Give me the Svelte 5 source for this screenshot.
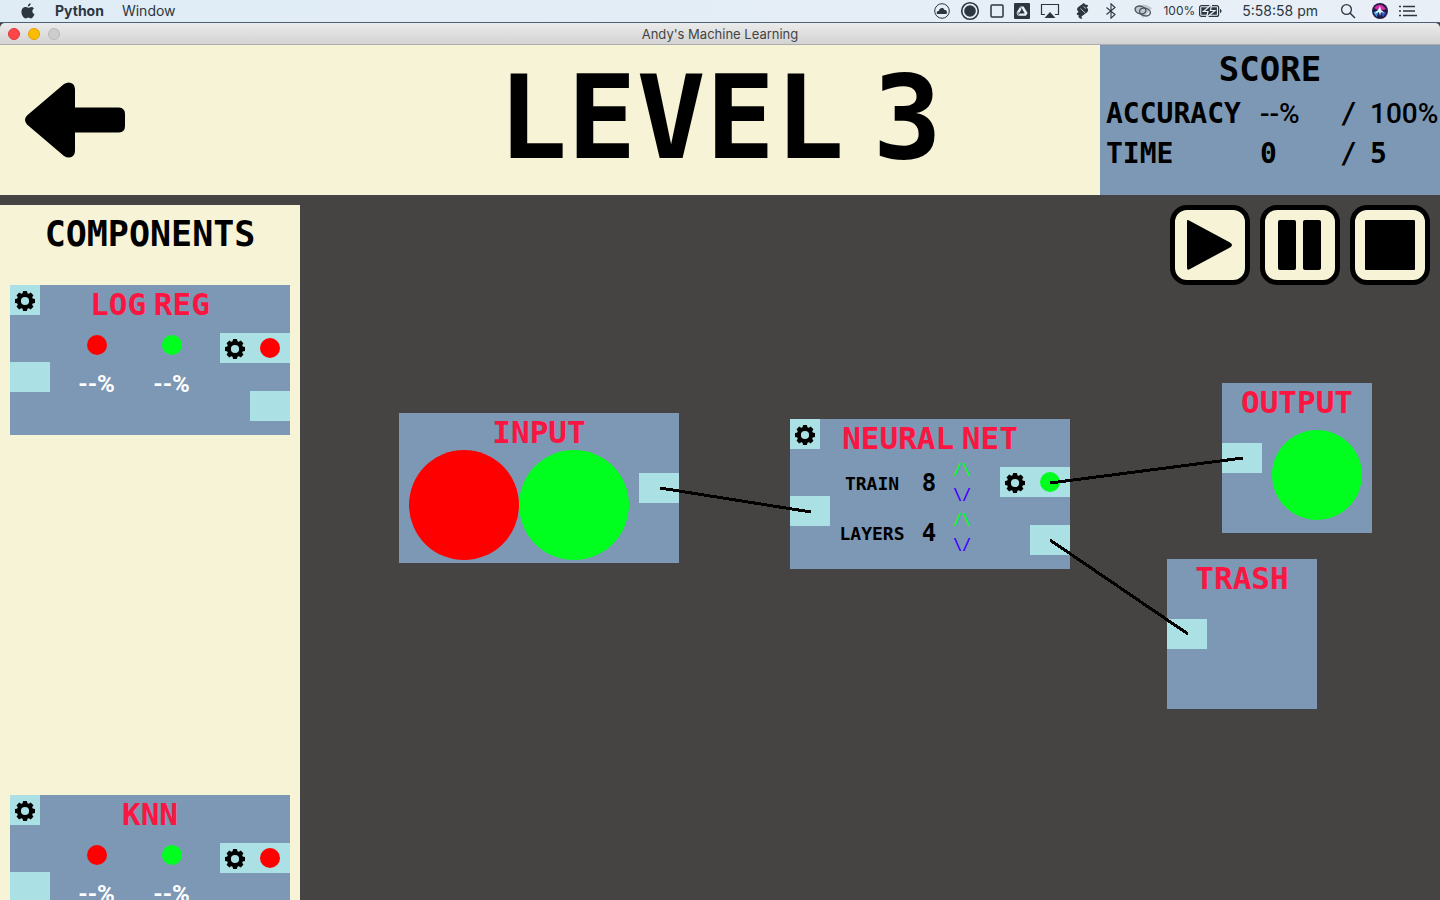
<script>
  const palette = [
    { name: ['LOG', 'REG'] },
    { name: ['KNN'] }
  ];
  const settings = [
    { label: 'TRAIN', value: 8 },
    { label: 'LAYERS', value: 4 }
  ];
  const wires = [
    [360, 293, 511, 317],
    [750, 288, 943, 263],
    [750, 345, 888, 439]
  ];
  const teeth = [0, 45, 90, 135, 180, 225, 270, 315];
</script>

{#snippet words(list)}{#each list as word, i}{#if i > 0}<span class="space">{' '}</span>{/if}{word}{/each}{/snippet}

{#snippet gear(label)}
  <button class="gear" aria-label={label}>
    <svg width="20" height="20" viewBox="-10 -10 20 20">
      <circle r="6.1" fill="none" stroke="#000" stroke-width="4" />
      {#each teeth as angle}
        <path d="M-2.6-7L-1.9-10H1.9L2.6-7Z" transform="rotate({angle})" />
      {/each}
    </svg>
  </button>
{/snippet}

{#snippet model(name, output, body)}
  <div class="left">
    {@render gear('Settings')}
    <div class="port"></div>
  </div>
  <div class="main">
    <h2>{@render words(name)}</h2>
    {@render body()}
  </div>
  <div class="right">
    <div class="filter">
      {@render gear('Filter')}
      <span class="dot {output}"></span>
    </div>
    <div class="port"></div>
  </div>
{/snippet}

{#snippet rates()}
  <div class="rates">
    <div><span class="dot red"></span><span>--%</span></div>
    <div><span class="dot green"></span><span>--%</span></div>
  </div>
{/snippet}

{#snippet steppers()}
  {#each settings as item}
    <div class="setting">
      <span class="label">{item.label}</span>
      <span class="value">{item.value}</span>
      <span class="steps">
        <button class="up">/\</button>
        <button class="down">\/</button>
      </span>
    </div>
  {/each}
{/snippet}

<div class="screen">
  <nav class="menubar">
    <svg class="apple" width="14" height="16" viewBox="0 0 14 16">
      <path d="M9.7.2c.1 1.6-1.3 3.2-2.8 3.2C6.700 1.900 8.100.4 9.700.2ZM12.900 5.500c-2.300 1.500-1.900 4.600.6 5.600-.6 1.800-2 4.300-3.500 4.300-1 0-1.500-.6-2.700-.6s-1.700.6-2.600.6C2.700 15.400.4 12 .4 8.700c0-3 2-4.700 4-4.700 1.200 0 2 .7 2.900.7.800 0 1.900-.8 3.300-.8 1 0 1.800.5 2.300 1.600Z" />
    </svg>
    <b>Python</b>
    <span>Window</span>
    <div class="status">
      <svg width="16" height="16" viewBox="0 0 16 16"><circle cx="8" cy="8" r="7.300" fill="none" stroke="#2c3640" /><path d="M3 11c-1-2 .5-3.200 1.800-3C5.500 4.500 9.500 4 10.500 7c2.500 0 3 2.500 2 4Z" /></svg>
      <svg width="20" height="20" viewBox="0 0 20 20"><circle cx="10" cy="10" r="8.300" fill="none" stroke="#2c3640" stroke-width="1.600" /><circle cx="10" cy="10" r="5.800" /></svg>
      <svg width="14" height="14" viewBox="0 0 14 14"><rect x="1" y="1" width="12" height="12" rx="1" fill="none" stroke="#2c3640" stroke-width="1.500" /></svg>
      <svg width="16" height="16" viewBox="0 0 16 16"><rect width="16" height="16" rx="1" /><path d="M6.200 3.500h3.400l4 6.500-1.700 2.700H4L2.400 10ZM8 6l-2.500 4.300h5Z" fill="#e8eff7" fill-rule="evenodd" /><path d="m6.200 3.500 3.700 6.500M2.400 10h8M4 12.700 8 6" stroke="#2c3640" stroke-width=".7" /></svg>
      <svg width="20" height="16" viewBox="0 0 20 16"><path d="M5 11.500H1.500v-10h17v10H15" fill="none" stroke="#2c3640" stroke-width="1.200" /><path d="m10 9 5.500 6h-11Z" /></svg>
      <svg class="apart" width="13" height="16" viewBox="0 0 13 16"><path d="M7.800 0 2 4.200C.6 5.600.8 7.600 2.600 8.800L1 10.200c-.8 1 .2 2 1.600 1.800-.6 2 .4 4 3.600 3.800l-.8-2.200 5.800-4.400c1.500-1.600 1.200-3.400-.6-4.600L12 3.300c.4-1.200-1-1.800-2.400-1.500Z" /><path d="m4.500 5.500 4.700 4.500M7.500 3.500l2.500 2" stroke="#e8eff7" stroke-width=".7" /></svg>
      <svg class="apart" width="12" height="16" viewBox="0 0 12 16"><path d="m1.500 4.500 8.500 7L6 15.200V.8L10 4.500l-8.500 7" fill="none" stroke="#2c3640" stroke-width="1.100" /></svg>
      <svg class="apart" width="20" height="16" viewBox="0 0 20 16"><path d="M1 5Q10-2 19 5l-9 10Z" fill="#bfc7cf" /><g fill="none" stroke="#4b555e" stroke-width="1.400"><ellipse cx="7.500" cy="7" rx="5.500" ry="3.800" transform="rotate(15 7.500 7)" /><ellipse cx="12" cy="9" rx="5.500" ry="3.800" transform="rotate(15 12 9)" /></g></svg>
      <span class="charge">100%</span>
      <svg class="battery" width="24" height="14" viewBox="0 0 24 14"><rect x=".6" y="1.600" width="19" height="10.800" rx="2" fill="none" stroke="#2c3640" stroke-width="1.200" /><rect x="2.300" y="3.300" width="15.600" height="7.400" /><path d="M21 5c2 .5 2 3.500 0 4Z" /><path d="M12.500.5 4.500 7.500h4.500L7.500 13.500l8.500-7h-4.500Z" stroke="#e8eff7" stroke-width="1.200" /></svg>
      <time>5:58:58 pm</time>
      <svg width="16" height="16" viewBox="0 0 16 16"><circle cx="6.500" cy="6.500" r="4.900" fill="none" stroke="#2c3640" stroke-width="1.300" /><path d="m10 10 5 5" stroke="#2c3640" stroke-width="1.500" /></svg>
      <svg class="apart" width="16" height="16" viewBox="0 0 16 16"><circle cx="8" cy="8" r="8" fill="#251a45" /><path d="M2 5Q8-2 14 6L8 8Z" fill="#d92ba8" /><path d="m1.500 9 6-2-3 7Z" fill="#2596e8" /><path d="m8 8 6 2-3 4Z" fill="#3557d6" /><path d="m8 3 1 4 4 3-4-1-1 4-1-4-5 2 4-4Z" fill="#dffcff" /></svg>
      <svg width="20" height="12" viewBox="0 0 20 12"><path d="M1 1.500h2m2 0h12M1 6h2m2 0h12M1 10.500h2m2 0h14" stroke="#2c3640" stroke-width="1.700" /></svg>
    </div>
  </nav>

  <div class="titlebar">
    <div class="lights"><i></i><i></i><i></i></div>
    <span>Andy's Machine Learning</span>
  </div>

  <header>
    <button class="back" aria-label="Back">
      <svg width="100" height="76" viewBox="0 0 100 76"><path d="M39 2Q44-1 48 2Q50 4 50 7V25.500H94Q100 26 100 32V44Q100 50 94 50.500H50V69Q50 72 48 74Q44 77 39 74L2 42.500Q-2 38 2 33.500Z" /></svg>
    </button>
    <h1>{@render words(['LEVEL', '3'])}</h1>
    <section class="score">
      <h2>SCORE</h2>
      <table>
        <tbody>
          <tr><th>ACCURACY</th><td class="percent">--%</td><td>/</td><td class="percent">100%</td></tr>
          <tr><th>TIME</th><td>0</td><td>/</td><td>5</td></tr>
        </tbody>
      </table>
    </section>
  </header>

  <main>
    <aside>
      <h2>COMPONENTS</h2>
      {#each palette as item}
        <article class="node model">
          {@render model(item.name, 'red', rates)}
        </article>
      {/each}
    </aside>

    <section class="canvas">
      <div class="controls">
        <button aria-label="Play"><svg width="50" height="50" viewBox="0 0 50 50"><path d="M2 1Q2-1 5 1L45 22.500Q49 25 45 27.500L5 49Q2 51 2 48Z" /></svg></button>
        <button aria-label="Pause"><svg width="50" height="50" viewBox="0 0 50 50"><rect x="3" width="18" height="50" rx="2" /><rect x="28" width="18" height="50" rx="2" /></svg></button>
        <button aria-label="Stop"><svg width="50" height="50" viewBox="0 0 50 50"><rect width="50" height="50" rx="1" /></svg></button>
      </div>

      <article class="node free source" style="left: 99px; top: 218px">
        <h2>INPUT</h2>
        <div class="balls"><span class="ball red"></span><span class="ball green"></span></div>
        <div class="port edge"></div>
      </article>

      <article class="node free model" style="left: 490px; top: 224px">
        {@render model(['NEURAL', 'NET'], 'green', steppers)}
      </article>

      <article class="node free sink" style="left: 922px; top: 188px">
        <h2>OUTPUT</h2>
        <span class="ball green"></span>
        <div class="port edge"></div>
      </article>

      <article class="node free sink" style="left: 867px; top: 364px">
        <h2>TRASH</h2>
        <div class="port edge"></div>
      </article>

      <svg class="wires">
        {#each wires as [x1, y1, x2, y2]}
          <line {x1} {y1} {x2} {y2} />
        {/each}
      </svg>
    </section>
  </main>
</div>

<style>
  :global(body) { margin: 0; }
  * { box-sizing: border-box; }
  h1, h2 { margin: 0; font-weight: 700; white-space: nowrap; }
  button { padding: 0; border: 0; background: none; font: inherit; cursor: pointer; }
  svg { display: block; flex: none; }

  .screen {
    display: flex;
    flex-direction: column;
    height: 100vh;
    overflow: hidden;
    background: #464343;
    color: #000;
    font-family: "DejaVu Sans Mono", monospace;
    font-weight: 700;
  }
  .space { font-family: Roboto, sans-serif; white-space: pre; }

  .menubar {
    display: flex;
    align-items: center;
    flex: none;
    height: 23px;
    padding: 0 22px 0 21px;
    border-bottom: 1px solid #4c6178;
    background: linear-gradient(90deg, #dfecf6, #e9eff7);
    color: #2c3640;
    fill: #2c3640;
    font: 400 14px/22px Inter, sans-serif;
  }
  .menubar b { margin: 0 18px 0 20px; }
  .status { display: flex; align-items: center; gap: 10px; margin-left: auto; }
  .apart { margin-left: 6px; }
  .charge { font-size: 12px; }
  .battery { margin-left: -6px; }
  time { margin: 0 12px 0 9px; }

  .titlebar {
    position: relative;
    flex: none;
    height: 22px;
    border-bottom: 1px solid #adadad;
    border-radius: 5px 5px 0 0;
    background: linear-gradient(#ebebeb, #d3d3d3);
    color: #444;
    font: 400 13px/22px Inter, sans-serif;
    text-align: center;
  }
  .lights { position: absolute; left: 8px; top: 5px; display: flex; gap: 8px; }
  .lights i { width: 12px; height: 12px; border: 1px solid #e2383b; border-radius: 50%; background: #fd4648; }
  .lights i:nth-child(2) { border-color: #e6a100; background: #fdbc02; }
  .lights i:nth-child(3) { border-color: #b9b9b9; background: #cdcdcd; }

  header {
    display: grid;
    grid-template-columns: 340px 1fr 340px;
    flex: none;
    height: 150px;
    background: #f7f3d7;
  }
  .back { justify-self: start; padding: 0 25px; }
  h1 { display: flex; justify-content: center; font-size: 115px; line-height: 146px; }
  .score { padding: 3px 6px; background: #7c98b5; }
  .score h2 { margin-bottom: 4px; font-size: 34px; line-height: 42px; text-align: center; }
  table { width: 100%; border-collapse: collapse; table-layout: fixed; font-size: 28px; line-height: 40px; }
  th, td { padding: 0; text-align: left; }
  th { width: 154px; }
  td:nth-child(2) { width: 80px; }
  td:nth-child(3) { width: 30px; }
  .percent { font-family: Roboto, sans-serif; font-weight: 500; }

  main { display: grid; grid-template-columns: 300px 1fr; flex: 1; min-height: 0; }
  aside {
    display: flex;
    flex-direction: column;
    margin-top: 10px;
    padding: 0 10px;
    overflow: hidden;
    background: #f7f3d7;
  }
  aside > h2 { margin-bottom: 22px; font-size: 35px; line-height: 58px; text-align: center; }
  aside article + article { margin-top: 360px; }

  .node { flex: none; height: 150px; background: #7c98b5; }
  .node h2 { display: flex; justify-content: center; height: 39px; color: #fa1641; font-size: 31px; line-height: 38px; }
  .model { display: grid; grid-template-columns: 40px minmax(0, 1fr) 70px; width: 280px; }
  .main h2 { padding-left: 30px; }
  .left { display: grid; align-content: start; gap: 47px; }
  .right { display: flex; flex-direction: column; align-items: flex-end; gap: 28px; padding-top: 48px; }
  .port { width: 40px; height: 30px; background: #abe1e4; }
  .gear { display: grid; place-items: center; width: 30px; height: 30px; padding-top: 2px; background: #abe1e4; }
  .filter { display: flex; align-items: center; gap: 10px; width: 70px; background: #abe1e4; }
  .dot { width: 20px; height: 20px; border-radius: 50%; }
  .red { background: #f00; }
  .green { background: #00ff1e; }

  .rates { display: grid; grid-template-columns: 75px 75px; padding: 11px 9px; color: #fff; font: 700 24px/38px Roboto, sans-serif; }
  .rates div { display: grid; justify-items: center; gap: 10px; }

  .setting { display: grid; grid-template-columns: 84px 30px 36px; align-items: center; justify-items: center; height: 50px; }
  .label { font-size: 18px; }
  .value { font-size: 24px; }
  .steps { display: grid; font-size: 15px; line-height: 25px; }
  .up { color: #00ff1e; }
  .down { color: #40f; }

  .canvas { position: relative; overflow: hidden; }
  .controls { display: flex; justify-content: flex-end; gap: 10px; padding: 10px; }
  .controls button {
    display: grid;
    place-items: center;
    width: 80px;
    height: 80px;
    border: 5px solid #000;
    border-radius: 17px;
    background: #f7f3d7;
  }
  .free { position: absolute; }
  .source { width: 280px; }
  .sink { width: 150px; }
  .edge { position: absolute; top: 60px; left: 0; }
  .source .edge { right: 0; left: auto; }
  .balls { display: flex; margin: -2px 0 0 10px; }
  .ball { display: block; width: 110px; height: 110px; border-radius: 50%; }
  .sink .ball { width: 90px; height: 90px; margin: 8px 10px 0 auto; }
  .wires { position: absolute; inset: 0; width: 100%; height: 100%; pointer-events: none; stroke: #000; stroke-width: 3; shape-rendering: crispEdges; }
</style>
